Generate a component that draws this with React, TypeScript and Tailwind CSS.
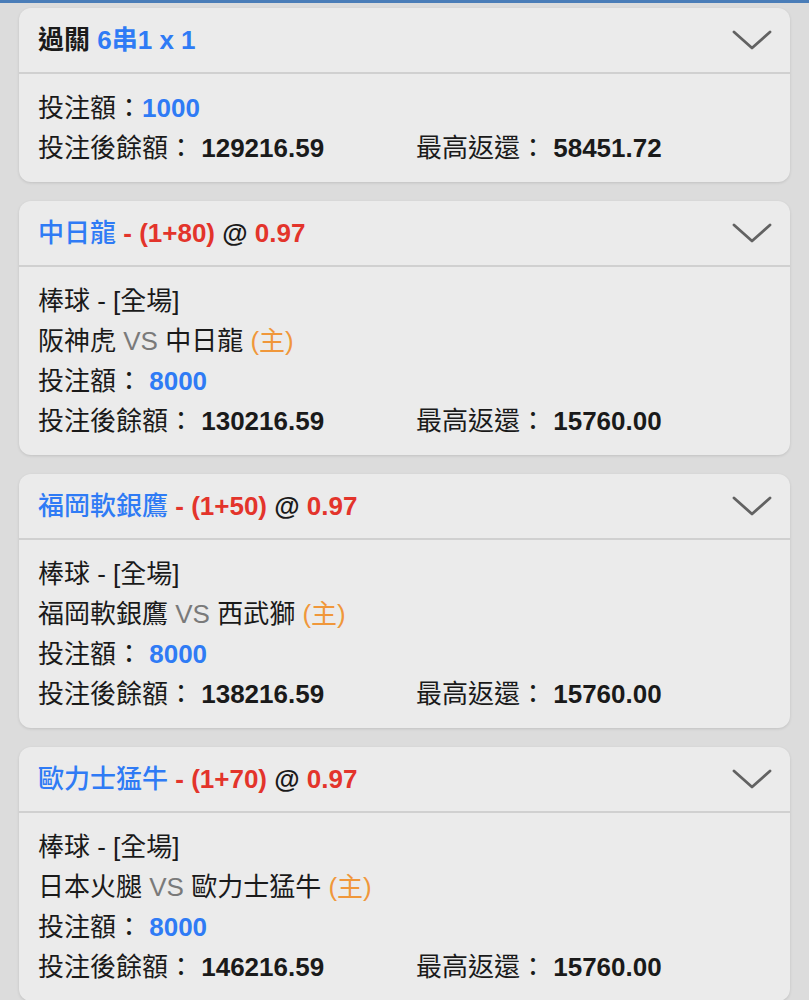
import React from "react";

type Bet = {
  team: string;
  handicap: string;
  odds: string;
  sport: string;
  away: string;
  home: string;
  stake: string;
  balance: string;
  maxReturn: string;
};

const bets: Bet[] = [
  {
    team: "中日龍",
    handicap: "(1+80)",
    odds: "0.97",
    sport: "棒球 - [全場]",
    away: "阪神虎",
    home: "中日龍",
    stake: "8000",
    balance: "130216.59",
    maxReturn: "15760.00",
  },
  {
    team: "福岡軟銀鷹",
    handicap: "(1+50)",
    odds: "0.97",
    sport: "棒球 - [全場]",
    away: "福岡軟銀鷹",
    home: "西武獅",
    stake: "8000",
    balance: "138216.59",
    maxReturn: "15760.00",
  },
  {
    team: "歐力士猛牛",
    handicap: "(1+70)",
    odds: "0.97",
    sport: "棒球 - [全場]",
    away: "日本火腿",
    home: "歐力士猛牛",
    stake: "8000",
    balance: "146216.59",
    maxReturn: "15760.00",
  },
];

function Chevron() {
  return (
    <svg width="40" height="22" viewBox="0 0 40 22" fill="none" className="shrink-0">
      <path d="M2 3 L20 19 L38 3" stroke="#626262" strokeWidth="2.8" strokeLinecap="round" strokeLinejoin="round" />
    </svg>
  );
}

function Card({ title, children }: { title: React.ReactNode; children: React.ReactNode }) {
  return (
    <div className="bg-[#ebebeb] rounded-[12px] shadow-[0_1px_3px_rgba(0,0,0,0.12)] overflow-hidden">
      <div className="h-[66px] flex items-center justify-between pl-[19px] pr-[18px] border-b-2 border-[#d0d0d0]">
        <div className="text-[26px] leading-none whitespace-nowrap">{title}</div>
        <Chevron />
      </div>
      <div className="px-[19px] py-[14px] text-[26px] leading-[40px] text-[#1a1a1a]">{children}</div>
    </div>
  );
}

function TotalsRow({ balance, maxReturn }: { balance: string; maxReturn: string }) {
  return (
    <div className="flex">
      <div className="w-[378px]">
        投注後餘額： <span className="font-bold">{balance}</span>
      </div>
      <div>
        最高返還： <span className="font-bold">{maxReturn}</span>
      </div>
    </div>
  );
}

export default function App() {
  return (
    <div
      className="min-h-[1000px] bg-[#dcdcdc] border-t-[3px] border-[#4a7db8] px-[19px] pt-[5px] flex flex-col gap-[19px]"
      style={{ fontFamily: '"Liberation Sans", "Noto Sans CJK TC", sans-serif' }}
    >
      <Card
        title={
          <>
            <span className="font-bold text-[#1a1a1a]">過關</span>{" "}
            <span className="font-bold text-[#2f7bf5]">6串1 x 1</span>
          </>
        }
      >
        <div>
          投注額：<span className="font-bold text-[#2f7bf5]">1000</span>
        </div>
        <TotalsRow balance="129216.59" maxReturn="58451.72" />
      </Card>

      {bets.map((b) => (
        <Card
          key={b.team}
          title={
            <>
              <span className="font-medium text-[#2f7bf5]">{b.team}</span>{" "}
              <span className="font-bold text-[#e3342b]">- {b.handicap}</span>{" "}
              <span className="font-bold text-[#1a1a1a]">@</span>{" "}
              <span className="font-bold text-[#e3342b]">{b.odds}</span>
            </>
          }
        >
          <div>{b.sport}</div>
          <div>
            {b.away} <span className="text-[#7a7a7a]">VS</span> {b.home}{" "}
            <span className="text-[#f0973a]">(主)</span>
          </div>
          <div>
            投注額： <span className="font-bold text-[#2f7bf5]">{b.stake}</span>
          </div>
          <TotalsRow balance={b.balance} maxReturn={b.maxReturn} />
        </Card>
      ))}
    </div>
  );
}
